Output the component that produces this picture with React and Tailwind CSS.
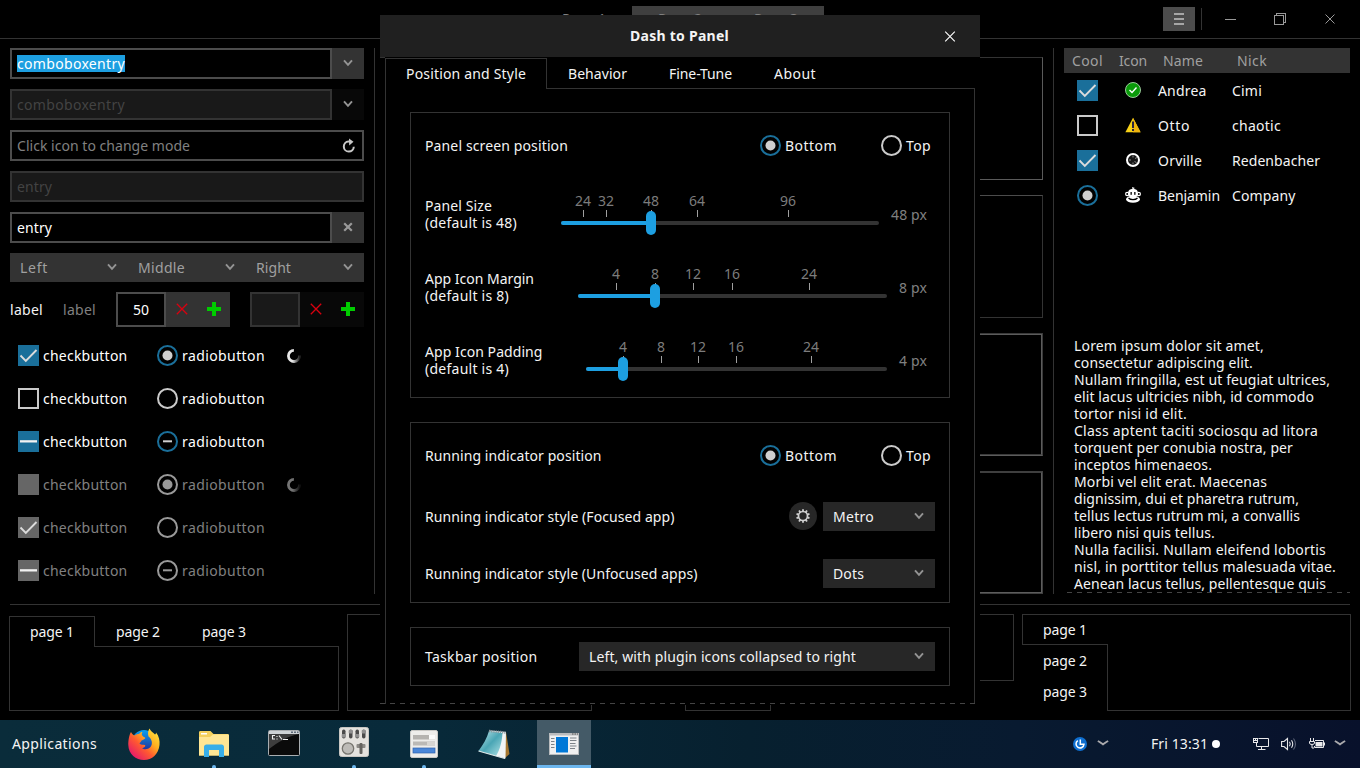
import React, { useLayoutEffect, useRef, useState } from "react";

/* A label whose tracking is adjusted so that it spans exactly `w` pixels. */
function T({ w, children, className = "" }) {
  const ref = useRef(null);
  const [spacing, setSpacing] = useState(0);
  useLayoutEffect(() => {
    const natural = ref.current.getBoundingClientRect().width;
    setSpacing((s) => s + (w - natural) / String(children).length);
  }, [w, children]);
  return (
    <span className={"block shrink-0 " + className} style={{ width: w }}>
      <span ref={ref} className="inline-block whitespace-pre align-top" style={{ letterSpacing: spacing }}>
        {children}
      </span>
    </span>
  );
}

const Chevron = ({ className = "text-[#949494]" }) => (
  <svg width="10" height="10" viewBox="0 0 10 10" className={"shrink-0 " + className}>
    <path d="M1 1.400 L5 5.900 L9 1.400" fill="none" stroke="currentColor" strokeWidth="1.900" />
  </svg>
);

const WideChevron = () => (
  <svg width="12" height="8" viewBox="0 0 12 8" className="shrink-0 text-[#a9a9ac]">
    <path d="M0.800 1 C3 2 4.500 3.600 6 4.400 C7.500 3.600 9 2 11.200 1" fill="none" stroke="currentColor" strokeWidth="1.900" />
  </svg>
);

function Check({ state = "off", disabled }) {
  const bg = disabled ? "#666666" : "#1a6f9a";
  return (
    <svg width="21" height="21" viewBox="0 0 21 21" className="shrink-0">
      {state === "off" && !disabled ? (
        <rect x="1" y="1" width="19" height="19" fill="#000" stroke="#cacaca" strokeWidth="2" />
      ) : (
        <rect width="21" height="21" fill={bg} />
      )}
      {state === "on" && <path d="M2.500 10.500 L7.800 15.800 L18.500 5" fill="none" stroke="#dcdcdc" strokeWidth="1.900" />}
      {state === "mixed" && <rect x="2" y="9.200" width="17" height="2.300" fill="#f2f2f2" />}
    </svg>
  );
}

function Radio({ state = "off", disabled }) {
  const ring = disabled ? "#999999" : state === "off" ? "#cacaca" : "#1a6f9a";
  const dot = disabled ? "#999999" : "#cfcfcf";
  return (
    <svg width="21" height="21" viewBox="0 0 21 21" className="shrink-0">
      <circle cx="10.500" cy="10.500" r="9.500" fill="#000" stroke={ring} strokeWidth="2" />
      {state === "on" && <circle cx="10.500" cy="10.500" r="5" fill={dot} />}
      {state === "mixed" && <rect x="6" y="9.300" width="9" height="2" fill={dot} />}
    </svg>
  );
}

const Spinner = ({ dim }) => (
  <svg width="16" height="16" viewBox="0 0 16 16" className={dim ? "opacity-50" : ""}>
    <defs>
      <linearGradient id="spin" x1="0" y1="0" x2="1" y2="0">
        <stop offset="0.350" stopColor="#e8e8e8" />
        <stop offset="1" stopColor="#202020" />
      </linearGradient>
    </defs>
    <path d="M8 2.300 A5.600 5.600 0 1 0 13.600 7.500" fill="none" stroke="url(#spin)" strokeWidth="2.800" />
  </svg>
);

function Entry({ children, dim, className = "" }) {
  return (
    <div
      className={
        "flex h-full items-center border-2 pl-[5px] " +
        (dim ? "border-[#333] bg-[#191919] text-[#434343] " : "border-[#4c4c4c] bg-black text-white ") +
        className
      }
    >
      {children}
    </div>
  );
}

const Side = ({ dim, children }) => (
  <div className={"flex h-full w-8 items-center justify-center " + (dim ? "bg-[#080808]" : "bg-[#333]")}>{children}</div>
);

function Spin({ value, dim }) {
  return (
    <div className="flex h-[35px] w-[114px]">
      <Entry dim={dim} className="w-[50px] pl-[15px]">
        {value && <T w={16}>{value}</T>}
      </Entry>
      <Side dim={dim}>
        <svg width="12" height="12" viewBox="0 0 12 12" className="mb-px">
          <path d="M0.800 0.800 L11.200 11.200 M11.200 0.800 L0.800 11.200" stroke="#d9000f" strokeWidth="1.300" />
        </svg>
      </Side>
      <Side dim={dim}>
        <svg width="14" height="14" viewBox="0 0 14 14" className="mb-px">
          <path d="M5 0h4v5h5v4H9v5H5V9H0V5h5z" fill="#00cc00" />
        </svg>
      </Side>
    </div>
  );
}

const toggles = [
  ["on", "on", false, true],
  ["off", "off", false, false],
  ["mixed", "mixed", false, false],
  ["off", "on", true, true],
  ["on", "off", true, false],
  ["mixed", "mixed", true, false],
];

function LeftColumn() {
  return (
    <div className="flex w-[354px] shrink-0 flex-col">
      <div className="flex flex-col gap-2.5">
        <div className="flex h-[31px]">
          <Entry className="w-[322px]">
            <T w={108} className="bg-[#1d9fe1]">comboboxentry</T>
          </Entry>
          <Side><Chevron /></Side>
        </div>
        <div className="flex h-[31px]">
          <Entry dim className="w-[322px]">
            <T w={108}>comboboxentry</T>
          </Entry>
          <Side dim><Chevron /></Side>
        </div>
        <div className="h-[31px]">
          <Entry className="w-full justify-between pr-[6px]">
            <T w={173} className="text-[#808080]">Click icon to change mode</T>
            <svg width="14" height="16" viewBox="0 0 14 16">
              <path d="M8.500 3.600 H6.500 A5 5 0 1 0 11.800 8.800" fill="none" stroke="#c8c8c8" strokeWidth="2" />
              <path d="M7 0.500 L11.500 3.700 L7.200 7.500 Z" fill="#c8c8c8" />
            </svg>
          </Entry>
        </div>
        <div className="h-[31px]">
          <Entry dim className="w-full"><T w={35}>entry</T></Entry>
        </div>
        <div className="flex h-[31px]">
          <Entry className="w-[322px]"><T w={35}>entry</T></Entry>
          <Side>
            <svg width="10" height="10" viewBox="0 0 10 10" className="mb-px">
              <path d="M1.200 1.200 L8.800 8.800 M8.800 1.200 L1.200 8.800" stroke="#999" strokeWidth="2.200" />
            </svg>
          </Side>
        </div>
        <div className="flex h-[29px] bg-[#333] text-[#a0a0a0]">
          {[["Left", 28], ["Middle", 47], ["Right", 35]].map(([t, w]) => (
            <div key={t} className="flex w-[118px] items-center justify-between pr-[11px] pl-2.5">
              <T w={w}>{t}</T>
              <Chevron />
            </div>
          ))}
        </div>
        <div className="flex h-[35px] items-center">
          <T w={33}>label</T>
          <T w={33} className="ml-5 text-[#808080]">label</T>
          <div className="ml-5 flex gap-5">
            <Spin value="50" />
            <Spin dim />
          </div>
        </div>
      </div>
      <div className="mt-[7px] flex flex-col pl-2">
        {toggles.map(([c, r, disabled, spin], i) => (
          <div key={i} className={"flex h-[43px] items-center " + (disabled ? "text-[#808080]" : "text-white")}>
            <Check state={c} disabled={disabled} />
            <T w={84.5} className="ml-1">checkbutton</T>
            <span className="ml-[29.5px] flex items-center gap-1">
              <Radio state={r} disabled={disabled} />
              <T w={83}>radiobutton</T>
            </span>
            {spin && <span className="ml-[21px]"><Spinner dim={disabled} /></span>}
          </div>
        ))}
      </div>
    </div>
  );
}

const rowIcons = {
  ok: (
    <svg width="16" height="16" viewBox="0 0 16 16">
      <circle cx="8" cy="8" r="7.500" fill="#0a9b0a" stroke="#a8d8a8" strokeWidth="0.900" />
      <path d="M4.500 8 L7 10.500 L11.500 5.500" fill="none" stroke="#fff" strokeWidth="1.400" />
    </svg>
  ),
  warn: (
    <svg width="16" height="16" viewBox="0 0 16 16">
      <path d="M8 0.800 L15.600 15.200 H0.400 Z" fill="#f7d117" />
      <path d="M8 0.800 L15.600 15.200 H8 Z" fill="#efb40e" />
      <rect x="7" y="4.500" width="2" height="6.500" fill="#2a2440" />
      <rect x="7" y="12" width="2" height="2" fill="#2a2440" />
    </svg>
  ),
  face: (
    <svg width="16" height="16" viewBox="0 0 16 16">
      <circle cx="8" cy="8" r="6" fill="#161616" stroke="#fff" strokeWidth="2" />
      <path d="M8 3.500v2M8 10.500v2M10 6.500l2-1M9.500 9.500l2 1M4 8h2" stroke="#8a8a8a" strokeWidth="1" />
    </svg>
  ),
  monkey: (
    <svg width="16" height="16" viewBox="0 0 16 16">
      <path d="M7 0 L10 1 L8.500 1.800 C11 2 12.500 3.500 12.800 5 H3.200 C3.500 3.500 5 2 7.500 1.800 Z" fill="#fff" />
      <circle cx="2.200" cy="7" r="1.600" fill="#000" stroke="#fff" strokeWidth="1.200" />
      <circle cx="13.800" cy="7" r="1.600" fill="#000" stroke="#fff" strokeWidth="1.200" />
      <rect x="3.500" y="4.500" width="9" height="5" rx="1" fill="#fff" />
      <rect x="5.500" y="5" width="1.300" height="2.800" fill="#000" />
      <rect x="9.200" y="5" width="1.300" height="2.800" fill="#000" />
      <ellipse cx="8" cy="12.200" rx="7" ry="3.500" fill="#fff" />
      <path d="M3.500 11 C5.500 13.200 10.500 13.200 12.500 11" fill="none" stroke="#000" strokeWidth="1.200" />
    </svg>
  ),
};

const people = [
  [<Check state="on" />, "ok", "Andrea", 48.5, "Cimi", 30],
  [<Check />, "warn", "Otto", 32, "chaotic", 49],
  [<Check state="on" />, "face", "Orville", 44, "Redenbacher", 88],
  [<Radio state="on" />, "monkey", "Benjamin", 62, "Company", 63.5],
];

const lorem = [
  ["Lorem ipsum dolor sit amet,", 190],
  ["consectetur adipiscing elit.", 179],
  ["Nullam fringilla, est ut feugiat ultrices,", 256],
  ["elit lacus ultricies nibh, id commodo", 240],
  ["tortor nisi id elit.", 113],
  ["Class aptent taciti sociosqu ad litora", 244],
  ["torquent per conubia nostra, per", 219],
  ["inceptos himenaeos.", 138],
  ["Morbi vel elit erat. Maecenas", 193],
  ["dignissim, dui et pharetra rutrum,", 225],
  ["tellus lectus rutrum mi, a convallis", 226],
  ["libero nisi quis tellus.", 141],
  ["Nulla facilisi. Nullam eleifend lobortis", 252],
  ["nisl, in porttitor tellus malesuada vitae.", 262],
  ["Aenean lacus tellus, pellentesque quis", 252],
];

function Dashes({ className }) {
  return (
    <div
      className={
        "h-px shrink-0 bg-[repeating-linear-gradient(90deg,#444_0px,#444_5px,transparent_5px,transparent_10px)] " + className
      }
    />
  );
}

function RightColumn() {
  return (
    <div className="ml-2.5 flex w-[286px] shrink-0 flex-col">
      <div className="flex h-[25px] items-center bg-[#333] pl-2 text-[#a0a0a0]">
        <T w={31}>Cool</T>
        <T w={28} className="ml-4">Icon</T>
        <T w={40} className="ml-4">Name</T>
        <T w={30} className="ml-[34px]">Nick</T>
      </div>
      {people.map(([mark, icon, name, nw, nick, kw]) => (
        <div key={name} className="flex h-[35px] items-center pl-[13px]">
          {mark}
          <span className="mb-px ml-[27px] w-[33px]">{rowIcons[icon]}</span>
          <span className="w-[74px]"><T w={nw}>{name}</T></span>
          <T w={kw}>{nick}</T>
        </div>
      ))}
      <div className="mt-[124px] flex h-[255px] flex-col pl-2.5">
        {lorem.map(([t, w]) => <T key={t} w={w} className="h-[17px]">{t}</T>)}
      </div>
      <Dashes className="ml-[3px]" />
    </div>
  );
}

function Backdrop() {
  return (
    <div className="flex h-[720px] flex-col">
      <header className="flex h-[39px] shrink-0 items-start border-b border-[#333] pl-[536px] text-[#808080]">
        {["Page 1", "Page 2", "Page 3"].map((p, i) => (
          <div key={p} className={"mt-1.5 flex h-[27px] w-24 items-center justify-center pb-[3px] " + (i ? "bg-[#3f3f3f]" : "")}>
            <T w={44}>{p}</T>
          </div>
        ))}
        <div className="mt-[7px] ml-[339px] flex h-6 w-8 flex-col items-center justify-center gap-[3px] bg-[#4c4c4c]">
          <i className="h-[2px] w-[10px] bg-[#a6a6a6]" />
          <i className="h-[2px] w-[10px] bg-[#a6a6a6]" />
          <i className="h-[2px] w-[10px] bg-[#a6a6a6]" />
        </div>
        <div className="mt-2 ml-1.5 h-[22px] w-px bg-[#333]" />
        <svg width="112" height="14" viewBox="0 0 112 14" className="mt-3 ml-[23px]" fill="none" stroke="#999" shapeRendering="crispEdges">
          <path d="M0 7.500H11" />
          <rect x="49.500" y="3.500" width="9" height="9" />
          <path d="M51.500 3V1.500H60.500V10.500H59" />
          <path d="M100.500 2.500L109.500 11.500M109.500 2.500L100.500 11.500" shapeRendering="auto" />
        </svg>
      </header>
      <div className="mt-[9px] flex h-[546px] shrink-0 pl-2.5">
        <LeftColumn />
        <div className="ml-2.5 w-px bg-[#333]" />
        <div className="ml-3 flex w-[656px] flex-col gap-[15px] pt-[9px]">
          <div className="h-[123px] border border-[#5a5a5a] border-t-[#333]" />
          <div className="h-[123px] border border-[#333] border-t-[#4c4c4c]" />
          <div className="h-[123px] border border-[#3a3a3a] border-b-[#5c5c5c]">
            <div className="h-full border border-[#5c5c5c] border-b-[#3a3a3a]" />
          </div>
          <div className="h-[123px] border border-[#3f3f3f]">
            <div className="h-full border border-[#5c5c5c] border-t-[#3f3f3f]" />
          </div>
        </div>
        <div className="ml-2.5 w-px bg-[#333]" />
        <RightColumn />
      </div>
      <div className="mx-2.5 mt-2.5 h-px shrink-0 bg-[#333]" />
      <div className="mt-[9px] flex pl-[9px]">
        <div className="mt-[2px] flex h-[95px] w-[330px] flex-col">
          <div className="flex h-[31px]">
            {["page 1", "page 2", "page 3"].map((p, i) => (
              <div
                key={p}
                className={
                  "flex h-full w-[86px] items-center border-[#333] " +
                  (i ? "border-b pt-px pl-[21px]" : "border-t border-r border-l pb-px pl-5")
                }
              >
                <T w={44}>{p}</T>
              </div>
            ))}
            <div className="flex-1 border-b border-[#333]" />
          </div>
          <div className="flex-1 border-r border-b border-l border-[#333]" />
        </div>
        <div className="ml-2 h-[97px] w-[245px] border border-[#333]" />
        <div className="ml-[93px] flex h-[97px] w-[329px] flex-col">
          <div className="h-[67px] border-t border-r border-l border-[#333]" />
          <div className="flex h-[30px]">
            <div className="w-[86px] border-r border-b border-l border-[#333]" />
            <div className="-mt-px flex-1 border-t border-[#333]" />
          </div>
        </div>
        <div className="ml-2 flex h-[97px] w-[329px]">
          <div className="flex w-[86px] flex-col">
            <div className="flex h-[31px] items-center border-t border-b border-l border-[#333] pl-5"><T w={44}>page 1</T></div>
            <div className="flex h-[31px] items-center border-r border-[#333] pl-[21px]"><T w={44}>page 2</T></div>
            <div className="flex h-[35px] items-start border-r border-[#333] pt-[7px] pl-[21px]"><T w={44}>page 3</T></div>
          </div>
          <div className="-ml-px flex-1 border-t border-r border-b border-[#333]" />
        </div>
      </div>
    </div>
  );
}

function Scale({ label, note, lw, nw, value, vw, ml, width, knob, ticks }) {
  return (
    <div className="flex h-[73px] items-center">
      <div className="flex w-[135px] shrink-0 flex-col pb-0.5">
        <T w={lw}>{label}</T>
        <T w={nw}>{note}</T>
      </div>
      <div className="relative h-[46px]" style={{ marginLeft: ml, width }}>
        {ticks.map(([t, x]) => (
          <div key={t} className="absolute top-0 flex w-5 -translate-x-1/2 flex-col items-center gap-px text-[#7c7c7c]" style={{ left: x }}>
            <T w={String(t).length * 8}>{t}</T>
            <i className="h-[7px] w-px bg-[#a0a0a0]" />
          </div>
        ))}
        <div className="absolute top-[29px] h-1 w-full rounded-full bg-[#333]" />
        <div className="absolute top-[29px] h-1 rounded-full bg-[#1d9fe1]" style={{ width: knob }} />
        <div className="absolute top-[19px] h-6 w-2.5 -translate-x-1/2 rounded-full bg-[#1d9fe1]" style={{ left: knob }} />
      </div>
      <T w={vw} className="ml-3 text-[#808080]">{value}</T>
    </div>
  );
}

const Choice = ({ label, w }) => (
  <div className="flex items-center">
    <T w={w}>{label}</T>
    <div className="ml-auto flex items-center gap-1 pr-[4px]">
      <Radio state="on" />
      <T w={52}>Bottom</T>
      <span className="ml-[40px]"><Radio /></span>
      <T w={25}>Top</T>
    </div>
  </div>
);

const Combo = ({ children, w, className }) => (
  <div className={"flex h-[29px] items-center justify-between bg-[#272727] pr-[11px] pl-2.5 " + className}>
    <T w={w}>{children}</T>
    <Chevron />
  </div>
);

function Gear() {
  return (
    <svg width="28" height="28" viewBox="0 0 28 28">
      <circle cx="14" cy="14" r="14" fill="#272727" />
      {[0, 36, 72, 108, 144].map((a) => (
        <path key={a} d="M14 7.200V9.500M14 18.500V20.800" stroke="#d0d0d0" strokeWidth="1.800" transform={`rotate(${a} 14 14)`} />
      ))}
      <circle cx="14" cy="14" r="4.500" fill="none" stroke="#d0d0d0" strokeWidth="1.700" />
    </svg>
  );
}

function Dialog() {
  return (
    <div className="absolute top-[15px] left-[380px] flex h-[690px] w-[600px] flex-col bg-black">
      <div className="flex h-[42px] shrink-0 items-center bg-[#202020] pb-px pl-[250px] font-bold">
        <T w={99}>Dash to Panel</T>
        <svg width="12" height="12" viewBox="0 0 12 12" className="ml-[215px]">
          <path d="M1.200 1.700L10.800 11.300M10.800 1.700L1.200 11.300" stroke="#fff" strokeWidth="1.100" />
        </svg>
      </div>
      <div className="h-px w-[5px] shrink-0 bg-[#333]" />
      <div className="ml-[5px] flex h-[31px] w-[590px] shrink-0">
        <div className="flex w-[162px] items-center border-t border-r border-l border-[#333] pb-px pl-5"><T w={120}>Position and Style</T></div>
        <div className="flex flex-1 items-center gap-[42px] border-b border-[#333] pt-px pl-[21px]">
          <T w={59}>Behavior</T>
          <T w={63}>Fine-Tune</T>
          <T w={42}>About</T>
        </div>
      </div>
      <div className="ml-[5px] flex h-[615px] w-[590px] flex-col gap-6 border-r border-l border-[#333] px-6 pt-[23px]">
        <div className="flex h-[286px] shrink-0 flex-col border border-[#333] px-[14px]">
          <div className="mt-[22px] mb-[22px]"><Choice label="Panel screen position" w={143} /></div>
          <Scale label="Panel Size" note="(default is 48)" lw={67} nw={92} value="48 px" vw={36} ml={1} width={318} knob={90}
            ticks={[[24, 22], [32, 45], [48, 90], [64, 136], [96, 227]]} />
          <Scale label="App Icon Margin" note="(default is 8)" lw={109} nw={84} value="8 px" vw={28} ml={18} width={309} knob={77}
            ticks={[[4, 38], [8, 77], [12, 115], [16, 154], [24, 231]]} />
          <Scale label="App Icon Padding" note="(default is 4)" lw={117.5} nw={84} value="4 px" vw={28} ml={26} width={301} knob={37}
            ticks={[[4, 37], [8, 75], [12, 112], [16, 150], [24, 225]]} />
        </div>
        <div className="flex h-[181px] shrink-0 flex-col border border-[#333] px-[14px] pt-[22px]">
          <Choice label="Running indicator position" w={176.5} />
          <div className="mt-9 flex items-center">
            <T w={249.5}>Running indicator style (Focused app)</T>
            <span className="mr-1.5 mb-px ml-auto"><Gear /></span>
            <Combo w={41} className="w-28">Metro</Combo>
          </div>
          <div className="mt-7 flex items-center justify-between">
            <T w={272.5}>Running indicator style (Unfocused apps)</T>
            <Combo w={31} className="w-28">Dots</Combo>
          </div>
        </div>
        <div className="flex h-[59px] shrink-0 items-center justify-between border border-[#333] px-[14px]">
          <T w={112.5}>Taskbar position</T>
          <Combo w={267} className="w-[356px]">Left, with plugin icons collapsed to right</Combo>
        </div>
      </div>
      <Dashes className="-mt-px w-[595px]" />
    </div>
  );
}

const Firefox = () => (
  <svg width="32" height="32" viewBox="0 0 32 32">
    <defs>
      <linearGradient id="fx" x1="1" y1="0" x2="0.150" y2="0.900">
        <stop offset="0" stopColor="#fff14a" />
        <stop offset="0.400" stopColor="#ffb01f" />
        <stop offset="0.650" stopColor="#ff5a30" />
        <stop offset="1" stopColor="#e5196b" />
      </linearGradient>
      <linearGradient id="globe" x1="0" y1="0" x2="0" y2="1">
        <stop offset="0" stopColor="#0aa0f0" />
        <stop offset="1" stopColor="#2a1d8a" />
      </linearGradient>
    </defs>
    <circle cx="16" cy="14" r="12" fill="url(#globe)" />
    <path d="M3 4 C4 6 5 7 6.500 7.500 C8 6 10 6 11 6 C13 3.500 14.500 4 14.500 4 C13 6 14 8.500 17 9.500 C18 10.500 15.500 11.500 13.500 12.500 C13 14 12 14.500 11.500 15.500 C12.500 17 15 16.500 17 17 C18 18 16 20 14 20 C16 22 20 21.500 22.500 19 C25 16 24 11 20.500 8.500 C19.500 5.500 20 2.500 21.500 0.500 C22.500 3 25 4.500 27 6.500 C28 5.800 28 5 28 4.500 C31 8 32 13 31.500 17 C30.500 26 24 32 16 32 C8 32 0.500 26 0.300 17 C0.200 13 1 7 3 4Z" fill="url(#fx)" />
  </svg>
);

const Folder = () => (
  <svg width="30" height="26" viewBox="0 0 30 26">
    <path d="M0 1.500 C0 0.500 0.500 0 1.500 0 H11.500 L14.500 3 H28.500 C29.500 3 30 3.500 30 4.500 V24.500 H0Z" fill="#f4d05c" />
    <path d="M0 6 H11 L14 3.500 H28.500 C29.500 3.500 30 4 30 5 V24.500 H0Z" fill="#ffe694" />
    <rect x="2" y="2" width="6" height="1.500" fill="#fff" />
    <path d="M5 26 V16 C5 14.500 6 13.500 7.500 13.500 H22.500 C24 13.500 25 14.500 25 16 V26 H20 V19 H10 V26Z" fill="#38aee8" />
  </svg>
);

const Terminal = () => (
  <svg width="32" height="26" viewBox="0 0 32 26">
    <rect x="0.500" y="0.500" width="31" height="25" rx="1" fill="#0a0a0a" stroke="#a9adb0" />
    <rect x="1" y="1" width="30" height="3" fill="#cfd3d6" />
    <path d="M23 1.500h2v1.500h-2zM26 1.500h2v1.500h-2zM29 1.500h1.500v1.500H29z" fill="#5f6a78" />
    <path d="M1 4H31C20 6 10 12 1 19Z" fill="#3d3d3d" />
    <path d="M7 5.500H4.500V9H7M9 6v1M9 8.500v1M11 5.500L14 9.500M15 9.500H20" fill="none" stroke="#f0f0f0" strokeWidth="1.100" />
  </svg>
);

const Mixer = () => (
  <svg width="30" height="30" viewBox="0 0 30 30">
    <rect x="0.500" y="0.500" width="29" height="29" rx="2" fill="#e4e2de" stroke="#c8c6c2" />
    {[3, 10, 16.500, 23].map((x, i) => (
      <g key={x}>
        <rect x={x} y="2.500" width="3.500" height="9" rx="1.700" fill="#4a4a4a" />
        <rect x={x - 0.300} y={i % 2 ? 3 : 7} width="4.100" height="3.500" rx="0.800" fill="#8f8f8f" />
      </g>
    ))}
    <circle cx="9" cy="21.500" r="5.700" fill="#bdbbb7" stroke="#77756f" strokeWidth="1.300" />
    <rect x="17.500" y="17" width="9" height="4" rx="1" fill="#8b8985" />
    <rect x="20.500" y="16" width="3" height="11" rx="1" fill="#65635f" />
  </svg>
);

const FormApp = () => (
  <svg width="28" height="28" viewBox="0 0 28 28">
    <rect x="0.500" y="0.500" width="27" height="27" rx="1.500" fill="#eeedeb" stroke="#c9c8c5" />
    <rect x="3" y="5" width="22" height="4.500" fill="#b5b3b0" />
    <rect x="19" y="5" width="6" height="4.500" fill="#fbfbfb" />
    <rect x="3" y="11.500" width="22" height="4" fill="#bbb9b6" />
    <rect x="17" y="11.500" width="8" height="4" fill="#d8d6d3" />
    <rect x="3" y="18" width="22" height="5" fill="#4a86d8" stroke="#2f62ad" strokeWidth="0.700" />
  </svg>
);

const Notepad = () => (
  <svg width="32" height="30" viewBox="0 0 32 30">
    <defs>
      <linearGradient id="np" x1="0" y1="0" x2="1" y2="1">
        <stop offset="0" stopColor="#c5eaee" />
        <stop offset="0.500" stopColor="#4aa6b5" />
        <stop offset="1" stopColor="#b0e2e6" />
      </linearGradient>
    </defs>
    <path d="M28 3 L31.500 25 L27 29 L24 28Z" fill="#a5762f" />
    <path d="M12 1.500 L28 3 L27.500 29.500 L18 27 Z" fill="#f1f4f5" />
    <path d="M11 2 L24.500 4 C24 12 22 21 18 27 L0.500 22 C5 16 9 9 11 2Z" fill="url(#np)" />
    <path d="M11 2 L27.500 3.500" stroke="#8c989d" strokeWidth="2.500" strokeDasharray="1.200 1" />
    <path d="M0.500 22 L18 27 L27 29.500" stroke="#dfe9ea" strokeWidth="1.200" fill="none" />
  </svg>
);

const DashApp = () => (
  <svg width="30" height="22" viewBox="0 0 30 22">
    <rect width="30" height="22" fill="#b9bbbd" />
    <rect x="1" y="2.500" width="28" height="18.500" fill="#f0f0f0" />
    <rect x="7" y="4" width="12" height="15.500" fill="#0078d7" />
    <path d="M2 5.500h3.500M2 8.500h3.500M2 11.500h3.500M2 14.500h3.500M21 5h6.500M21 7.500h6.500M21 10.500h5.500M21 13h6.500M21 15.500h5" stroke="#7c8288" strokeWidth="1" />
    <path d="M23 0.500h1.500v1h-1.500zM25.500 0.500H27v1h-1.500zM28 0.500h1v1h-1z" fill="#555" />
  </svg>
);

function Launcher({ children, running, active }) {
  return (
    <div className="flex h-full w-[70px] justify-center">
      <div className={"relative flex h-full w-[54px] items-center justify-center " + (active ? "bg-[#445a67]" : "")}>
        {children}
        {running && <i className="absolute bottom-0 h-[3px] w-1 rounded-t-full bg-[#6cb6ee]" />}
        {active && <i className="absolute bottom-0 h-[3px] w-full bg-[#6cb6ee]" />}
      </div>
    </div>
  );
}

function Taskbar() {
  return (
    <div className="flex h-12 items-center bg-[linear-gradient(90deg,#0a2c3a_0%,#082a3a_30%,#07202f_55%,#081a30_75%,#08112b_100%)] pl-3">
      <T w={85} className="mb-0.5">Applications</T>
      <div className="ml-3 flex h-full">
        <Launcher><Firefox /></Launcher>
        <Launcher running><Folder /></Launcher>
        <Launcher><span className="mr-px mb-[2px]"><Terminal /></span></Launcher>
        <Launcher running><span className="mb-1"><Mixer /></span></Launcher>
        <Launcher running><FormApp /></Launcher>
        <Launcher><Notepad /></Launcher>
        <Launcher active><DashApp /></Launcher>
      </div>
      <div className="ml-auto flex h-full items-center pr-[14px]">
        <svg width="14" height="14" viewBox="0 0 14 14">
          <circle cx="7" cy="7" r="7" fill="#0f6fd0" />
          <path d="M4.800 3.600 A4 4 0 1 0 11 7.300 H7.300 V2.500" fill="none" stroke="#fff" strokeWidth="1.500" />
        </svg>
        <span className="ml-2.5"><WideChevron /></span>
        <T w={57} className="mb-0.5 ml-[42px]">Fri 13:31</T>
        <i className="ml-1 size-2 rounded-full bg-white" />
        <svg width="17" height="14" viewBox="0 0 17 14" className="ml-[33px]" fill="none" stroke="#e8e8ea" strokeWidth="1">
          <path d="M5.500 1.500H15.500V9.500H3.500V6M8.500 9.500V12M5 12.500H12.500" />
          <rect x="0.500" y="1.500" width="4" height="4" />
          <path d="M2.500 1.500V4M1 3.500H4" />
        </svg>
        <svg width="17" height="14" viewBox="0 0 17 14" className="ml-[11px]" fill="none" stroke="#e8e8ea" strokeWidth="1.100">
          <path d="M0.600 4.500H3L6.500 1.500V12.500L3 9.500H0.600Z" />
          <path d="M8.500 4.800Q10 7 8.500 9.200M10.500 3.200Q13 7 10.500 10.800" />
          <path d="M12.500 1.500Q16.500 7 12.500 12.500" stroke="#5c6478" />
        </svg>
        <svg width="17" height="14" viewBox="0 0 17 14" className="ml-[11px]" fill="none" stroke="#e8e8ea">
          <path d="M6 3.500H14.500V10.500H5.500V9M15.500 5.500V8.500" />
          <rect x="6.500" y="5" width="7" height="4.500" fill="#e8e8ea" stroke="none" />
          <path d="M1.500 1V4M4.500 1V4M0.500 4.500H5.500V6Q5.500 7.500 3 7.500Q0.500 7.500 0.500 6ZM3 7.500V11H5" />
        </svg>
        <span className="ml-2"><WideChevron /></span>
      </div>
    </div>
  );
}

export default function App() {
  return (
    <div className="relative h-[768px] w-[1360px] overflow-hidden bg-black font-['Noto_Sans','Open_Sans',sans-serif] text-[14px] leading-[17px] text-[#f4f4f4]">
      <Backdrop />
      <Dialog />
      <Taskbar />
    </div>
  );
}
